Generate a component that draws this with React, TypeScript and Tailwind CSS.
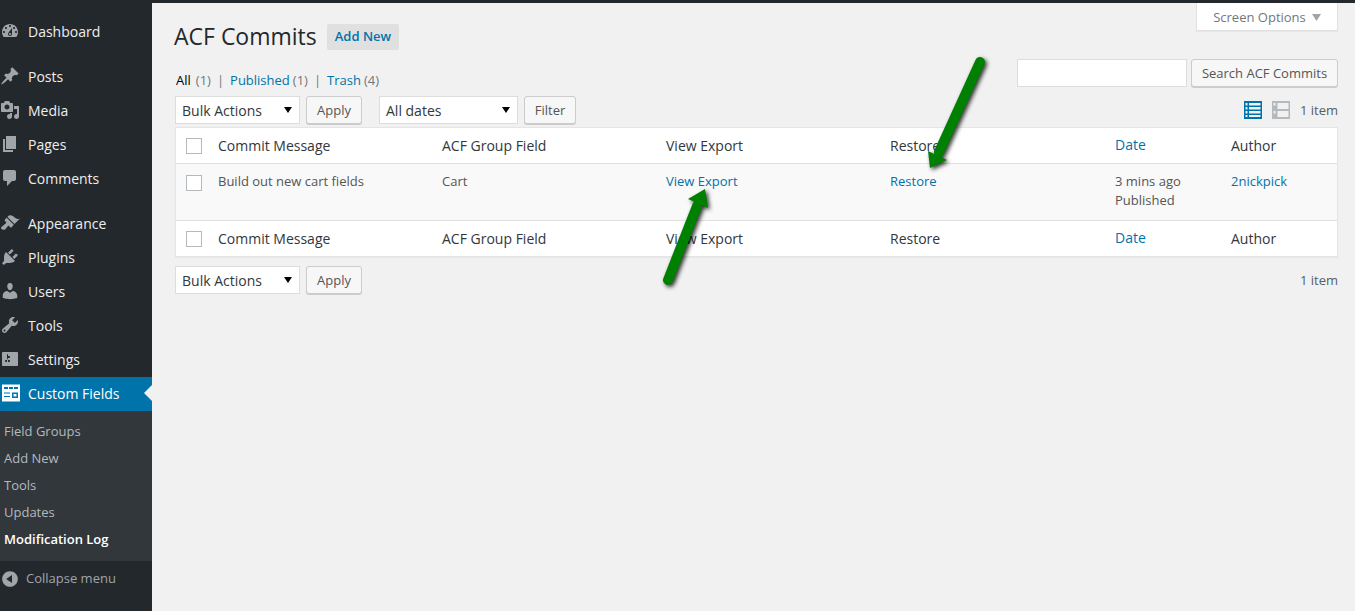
import type { ReactNode } from 'react'

const paths: Record<string, string> = {
  dashboard:
    'M3.76 16h12.48c1.1-1.37 1.76-3.11 1.76-5 0-4.42-3.58-8-8-8s-8 3.58-8 8c0 1.89.66 3.63 1.76 5zM10 4c.55 0 1 .45 1 1s-.45 1-1 1-1-.45-1-1 .45-1 1-1zM6 6c.55 0 1 .45 1 1s-.45 1-1 1-1-.45-1-1 .45-1 1-1zm8 0c.55 0 1 .45 1 1s-.45 1-1 1-1-.45-1-1 .45-1 1-1zm-5.37 5.55L12 7v6c0 1.1-.9 2-2 2s-2-.9-2-2c0-.57.24-1.08.63-1.45zM4 10c.55 0 1 .45 1 1s-.45 1-1 1-1-.45-1-1 .45-1 1-1zm12 0c.55 0 1 .45 1 1s-.45 1-1 1-1-.45-1-1 .45-1 1-1zm-5 3c0-.55-.45-1-1-1s-1 .45-1 1 .45 1 1 1 1-.45 1-1z',
  posts:
    'M10.44 3.02l1.82-1.82 6.36 6.35-1.83 1.82c-1.05-.68-2.48-.57-3.41.36l-.75.75c-.92.93-1.04 2.35-.35 3.41l-1.83 1.82-2.41-2.41-2.8 2.79c-.42.42-3.38 2.71-3.8 2.29s1.86-3.39 2.28-3.81l2.79-2.79L4.1 9.36l1.83-1.82c1.05.69 2.48.57 3.4-.36l.75-.75c.93-.92 1.05-2.35.36-3.41z',
  media:
    'M13 11V4c0-.55-.45-1-1-1h-1.67L9 1H5L3.67 3H2c-.55 0-1 .45-1 1v7c0 .55.45 1 1 1h10c.55 0 1-.45 1-1zM7 4.5c1.38 0 2.5 1.12 2.5 2.5S8.38 9.5 7 9.5 4.5 8.38 4.5 7 5.62 4.5 7 4.5zM14 6h5v10.5c0 1.38-1.12 2.5-2.5 2.5S14 17.88 14 16.5s1.12-2.5 2.5-2.5c.17 0 .34.02.5.05V9h-3V6zm-4 8.05V13h2v3.5c0 1.38-1.12 2.5-2.5 2.5S7 17.88 7 16.5 8.12 14 9.5 14c.17 0 .34.02.5.05z',
  pages: 'M6 15V2h10v13H6zm-1 1h8v2H3V5h2v11z',
  comments:
    'M5 2h9c1.1 0 2 .9 2 2v7c0 1.1-.9 2-2 2h-2l-5 5v-5H5c-1.1 0-2-.9-2-2V4c0-1.1.9-2 2-2z',
  appearance:
    'M14.48 11.06L7.41 3.99l1.5-1.5c.5-.56 2.3-.47 3.51.32 1.21.8 1.43 1.28 2.91 2.1 1.18.64 2.45 1.26 4.45.85zm-.71.71L6.7 4.7 4.93 6.47c-.39.39-.39 1.02 0 1.41l1.06 1.06c.39.39.39 1.03 0 1.42-.6.6-1.43 1.11-2.21 1.69-.35.26-.7.53-1.01.84C1.43 13.23.4 14.98 1.43 16.02c.92.92 2.89 1.2 4.17-.12.16-.16.28-.33.4-.5.54-.71.99-1.51 1.74-2.26.39-.39 1.03-.39 1.42 0l1.06 1.06c.39.39 1.02.39 1.41 0z',
  plugins:
    'M13.11 4.36L9.87 7.6 8 5.73l3.24-3.24c.35-.34 1.05-.2 1.56.32.52.51.66 1.21.31 1.55zm-8 1.77l.91-1.12 9.01 9.01-1.19.84c-.71.71-2.63 1.16-3.82 1.16H6.14L4.9 17.26c-.59.59-1.54.59-2.12 0-.59-.58-.59-1.53 0-2.12l1.24-1.24v-3.88c0-1.13.4-3.19 1.09-3.89zm7.26 3.97l3.24-3.24c.34-.35 1.04-.21 1.55.31.52.51.66 1.21.31 1.55l-3.24 3.25z',
  users:
    'M10 9.25c-2.27 0-2.73-3.44-2.73-3.44C7 4.02 7.82 2 9.97 2c2.16 0 2.98 2.02 2.71 3.81 0 0-.41 3.44-2.68 3.44zm0 2.57L12.72 10c2.39 0 4.52 2.33 4.52 4.53v2.49s-3.65 1.13-7.24 1.13c-3.65 0-7.24-1.13-7.24-1.13v-2.49c0-2.25 1.94-4.48 4.47-4.48z',
  tools:
    'M16.68 9.77c-1.34 1.34-3.3 1.67-4.95.99l-5.41 6.52c-.99.99-2.59.99-3.58 0s-.99-2.59 0-3.57l6.52-5.42c-.68-1.65-.35-3.61.99-4.95 1.28-1.28 3.12-1.62 4.72-1.06l-2.89 2.89 2.82 2.82 2.86-2.87c.53 1.58.18 3.39-1.08 4.65zM3.81 16.21c.4.39 1.04.39 1.43 0 .4-.4.4-1.04 0-1.43-.39-.4-1.03-.4-1.43 0-.39.39-.39 1.03 0 1.43z',
  settings:
    'M18 16V4c0-.55-.45-1-1-1H3c-.55 0-1 .45-1 1v12c0 .55.45 1 1 1h14c.55 0 1-.45 1-1zM8 11h1c.55 0 1 .45 1 1s-.45 1-1 1H8v1.5c0 .28-.22.5-.5.5s-.5-.22-.5-.5V13H6c-.55 0-1-.45-1-1s.45-1 1-1h1V5.5c0-.28.22-.5.5-.5s.5.22.5.5V7h1c.55 0 1 .45 1 1s-.45 1-1 1h-1v5.5c0 .28-.22.5-.5.5s-.5-.22-.5-.5V9z',
  fields:
    'M2 1.5h18v17H2v-17zM4 4v2h4V4H4zm5 0v2h4V4H9zm5 0v2h4V4h-4zM4 9.5v1h6v-1H4zm0 3.5v1h6v-1H4zm8-3.5V15h6V9.5h-6zm1.5 1.5h3v2.5h-3V11z',
  collapse:
    'M10 2.16c4.33 0 7.84 3.51 7.84 7.84s-3.51 7.84-7.84 7.84S2.16 14.33 2.16 10 5.71 2.16 10 2.16zm2 11.72V6.12L6.18 9.97z',
}

const tableCols = 'grid-cols-[26px_16px_224px_224px_224px_225px_116px_1fr]'

function Icon({ name, className }: { name: string; className: string }) {
  return (
    <svg viewBox="0 0 20 20" className={className} fill="currentColor" fillRule="evenodd">
      <path d={paths[name]} />
    </svg>
  )
}

function MenuItem({ icon, label, mt }: { icon: string; label: string; mt?: boolean }) {
  return (
    <div className={`flex items-center h-[34px] text-[14px] text-[#eeeeee] ${mt ? 'mt-[11px]' : ''}`}>
      <Icon name={icon} className="w-5 h-5 text-[#a0a5aa] shrink-0" />
      <span className="ml-2">{label}</span>
    </div>
  )
}

function Fake({ children, w, className = '' }: { children: ReactNode; w: string; className?: string }) {
  return (
    <div className={`flex items-center justify-between h-7 bg-white border border-[#dddddd] pl-[6px] pr-[7px] text-[14px] text-[#32373c] ${w} ${className}`}>
      <span>{children}</span>
      <svg viewBox="0 0 8 8" className="w-2 h-2 text-black" fill="currentColor">
        <path d="M0 1h8L4 7z" />
      </svg>
    </div>
  )
}

function Btn({ children, className = '' }: { children: ReactNode; className?: string }) {
  return (
    <div className={`flex items-center justify-center h-7 pt-[1px] bg-[#f7f7f7] border border-[#cccccc] rounded-[3px] shadow-[0_1px_0_#cccccc] text-[13px] text-[#555555] ${className}`}>
      {children}
    </div>
  )
}

function Check({ className = '' }: { className?: string }) {
  return <div className={`w-4 h-4 justify-self-end bg-white border border-[#b4b9be] ${className}`} />
}

function HeadRow({ className = '' }: { className?: string }) {
  return (
    <div className={`grid ${tableCols} items-center text-[14px] text-[#32373c] bg-white ${className}`}>
      <Check />
      <span />
      <span>Commit Message</span>
      <span>ACF Group Field</span>
      <span>View Export</span>
      <span>Restore</span>
      <span className="text-[#0073aa] -mt-[2px]">Date</span>
      <span>Author</span>
    </div>
  )
}

function Arrow({ className, box, line, head }: { className: string; box: string; line: number[]; head: string }) {
  return (
    <svg viewBox={box} className={`absolute ${className} drop-shadow-[2px_2px_2px_rgba(0,0,0,0.8)]`}>
      <line x1={line[0]} y1={line[1]} x2={line[2]} y2={line[3]} stroke="#008000" strokeWidth="10" strokeLinecap="round" />
      <polygon points={head} fill="#008000" />
    </svg>
  )
}

function ItemCount({ className = '' }: { className?: string }) {
  return <span className={`pt-[1px] text-[13px] text-[#555d66] ${className}`}>1 item</span>
}

export default function App() {
  return (
    <div className="relative flex h-[611px] w-[1355px] overflow-hidden bg-[#f1f1f1] font-['Open_Sans',sans-serif]">
      <aside className="w-[152px] shrink-0 bg-[#23282d] pt-[14px]">
        <MenuItem icon="dashboard" label="Dashboard" />
        <MenuItem icon="posts" label="Posts" mt />
        <MenuItem icon="media" label="Media" />
        <MenuItem icon="pages" label="Pages" />
        <MenuItem icon="comments" label="Comments" />
        <MenuItem icon="appearance" label="Appearance" mt />
        <MenuItem icon="plugins" label="Plugins" />
        <MenuItem icon="users" label="Users" />
        <MenuItem icon="tools" label="Tools" />
        <MenuItem icon="settings" label="Settings" />
        <div className="relative flex items-center h-[34px] mt-[1px] pb-[2px] bg-[#0073aa] text-[14px] text-white">
          <Icon name="fields" className="w-5 h-5 shrink-0" />
          <span className="ml-2">Custom Fields</span>
          <div className="absolute right-0 top-[8px] border-y-[8px] border-r-[8px] border-y-transparent border-r-[#f1f1f1]" />
        </div>
        <div className="bg-[#32373c] pt-[7px] pb-[8px] pl-1 text-[13px] text-[#b4b9be]">
          <div className="h-[27px] leading-[27px]">Field Groups</div>
          <div className="h-[27px] leading-[27px]">Add New</div>
          <div className="h-[27px] leading-[27px]">Tools</div>
          <div className="h-[27px] leading-[27px]">Updates</div>
          <div className="h-[27px] leading-[27px] font-semibold text-white">Modification Log</div>
        </div>
        <div className="flex items-center h-[34px] pt-[2px] text-[13px] text-[#a0a5aa]">
          <Icon name="collapse" className="w-5 h-5 shrink-0" />
          <span className="ml-[6px]">Collapse menu</span>
        </div>
      </aside>

      <main className="flex-1 min-w-0 flex flex-col">
        <div className="h-[3px] bg-[#23282d] shrink-0" />
        <div className="pl-[23px] pr-[17px]">
          <div className="flex items-start h-[56px]">
            <h1 className="mt-[17px] -ml-[1px] text-[23px] leading-[32px] text-[#23282d]">ACF Commits</h1>
            <div className="mt-[21px] ml-[10px] h-[26px] px-2 flex items-center rounded-[2px] bg-[#e0e0e0] text-[13px] font-semibold text-[#0073aa]">Add New</div>
            <div className="ml-auto w-[142px] h-[28px] pt-[2px] flex items-center justify-center gap-[6px] bg-white border border-t-0 border-[#e1e1e1] shadow-[0_1px_1px_rgba(0,0,0,0.04)] text-[13px] text-[#72777c]">
              Screen Options
              <svg viewBox="0 0 9 7" className="w-[9px] h-[7px] text-[#a0a5aa]" fill="currentColor">
                <path d="M0 0h9L4.5 7z" />
              </svg>
            </div>
          </div>

          <div className="flex items-end h-7 justify-between">
            <div className="text-[13px] leading-[14px] text-[#72777c] flex items-center">
              <span className="text-[#000000] pl-[1px]">All</span>
              <span className="ml-[5px]">(1)</span>
              <span className="mx-[6px]">|</span>
              <span className="text-[#0073aa]">Published</span>
              <span className="ml-[3px]">(1)</span>
              <span className="mx-[6px]">|</span>
              <span className="text-[#0073aa]">Trash</span>
              <span className="ml-[3px]">(4)</span>
            </div>
            <div className="flex gap-1">
              <div className="w-[170px] h-7 bg-white border border-[#dddddd]" />
              <Btn className="w-[147px]">Search ACF Commits</Btn>
            </div>
          </div>

          <div className="flex items-center mt-[9px] h-7">
            <Fake w="w-[125px]">Bulk Actions</Fake>
            <Btn className="w-14 ml-[6px]">Apply</Btn>
            <Fake w="w-[139px]" className="ml-[17px]">All dates</Fake>
            <Btn className="w-[52px] ml-[6px]">Filter</Btn>
            <svg viewBox="0 0 18 18" className="w-[18px] h-[18px] ml-auto text-[#0073aa]" fill="currentColor" fillRule="evenodd">
              <path d="M0 0h18v18H0V0zm1.5 2v2.5h2V2h-2zm3.5 0v2.5h11.5V2H5zM1.5 6v2.5h2V6h-2zM5 6v2.5h11.5V6H5zm-3.5 4v2.5h2V10h-2zM5 10v2.5h11.5V10H5zm-3.5 4v2h2v-2h-2zM5 14v2h11.5v-2H5z" />
            </svg>
            <svg viewBox="0 0 18 18" className="w-[18px] h-[18px] ml-[10px] text-[#b4b9be]" fill="currentColor" fillRule="evenodd">
              <path d="M0 0h18v18H0V0zm5.5 2v6h11V2h-11zm0 8v6h11v-6h-11zM1.5 2v2.5h2V2h-2zm0 8v2.5h2V10h-2z" />
            </svg>
            <ItemCount className="ml-[10px]" />
          </div>

          <div className="mt-[3px] border border-[#e5e5e5] shadow-[0_1px_1px_rgba(0,0,0,0.04)] bg-white">
            <HeadRow className="h-[36px] border-b border-[#e1e1e1]" />
            <div className={`grid ${tableCols} items-start h-[57px] pt-[8px] bg-[#f9f9f9] border-b border-[#e1e1e1] text-[13px] leading-[19px] text-[#555555]`}>
              <Check className="mt-[3px]" />
              <span />
              <span>Build out new cart fields</span>
              <span>Cart</span>
              <span className="text-[#0073aa]">View Export</span>
              <span className="text-[#0073aa]">Restore</span>
              <span>3 mins ago<br />Published</span>
              <span className="text-[#0073aa]">2nickpick</span>
            </div>
            <HeadRow className="h-[35px]" />
          </div>

          <div className="flex items-center mt-[9px] h-7">
            <Fake w="w-[125px]">Bulk Actions</Fake>
            <Btn className="w-14 ml-[6px]">Apply</Btn>
            <ItemCount className="ml-auto" />
          </div>
        </div>
      </main>

      <Arrow
        box="0 0 80 125"
        className="left-[920px] top-[50px] w-[80px] h-[125px]"
        line={[60, 12, 19, 102]}
        head="10,118 8,101 27,110"
      />
      <Arrow
        box="0 0 60 110"
        className="left-[655px] top-[185px] w-[60px] h-[110px]"
        line={[13, 95, 42, 21]}
        head="50,4 33,14 53,23"
      />
    </div>
  )
}
